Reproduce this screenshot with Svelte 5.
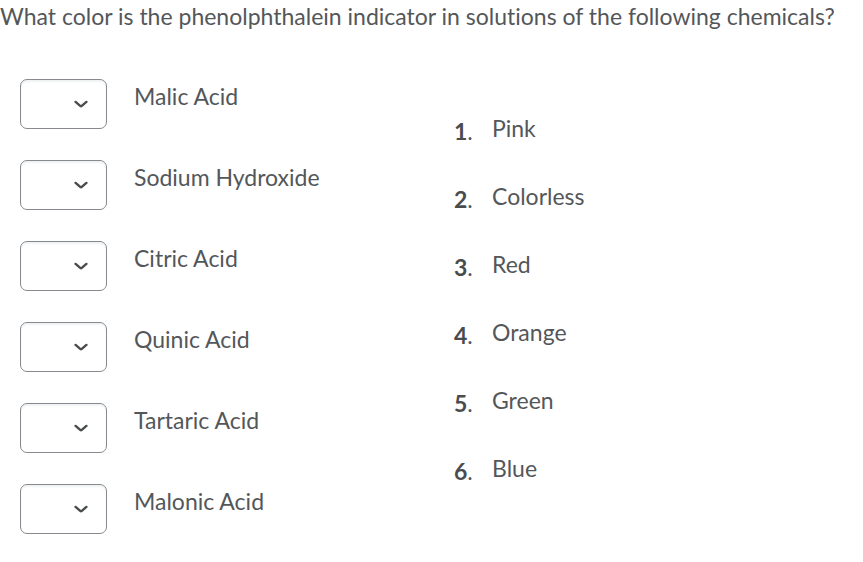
<script lang="ts">
  const chemicals = [
    'Malic Acid',
    'Sodium Hydroxide',
    'Citric Acid',
    'Quinic Acid',
    'Tartaric Acid',
    'Malonic Acid'
  ];
  const colors = ['Pink', 'Colorless', 'Red', 'Orange', 'Green', 'Blue'];

  let answers = $state(chemicals.map(() => ''));
</script>

<main class="question">
  <p class="prompt">What color is the phenolphthalein indicator in solutions of the following chemicals?</p>

  <div class="matching">
    <div class="chemicals">
      {#each chemicals as chemical, i (chemical)}
        <div class="chemical">
          <div class="picker">
            <select id="answer-{i}" bind:value={answers[i]}>
              <option value=""></option>
              {#each colors as color, n (color)}
                <option value={String(n + 1)}>{n + 1}</option>
              {/each}
            </select>
            <svg class="chevron" viewBox="0 0 14 8" aria-hidden="true">
              <path d="M1.6 1.9 L6.2 5.9 Q7 6.5 7.8 5.9 L12.4 1.9" />
            </svg>
          </div>
          <label for="answer-{i}">{chemical}</label>
        </div>
      {/each}
    </div>

    <ol class="colors">
      {#each colors as color, n (color)}
        <li>
          <span class="number"><b>{n + 1}</b>.</span>
          <span>{color}</span>
        </li>
      {/each}
    </ol>
  </div>
</main>

<style>
  :global(body) { background: #fff; }

  .question {
    font-family: Lato, 'Liberation Sans', sans-serif;
    font-size: 23px;
    font-variant-ligatures: none;
    line-height: 32px;
    color: #54575a;
  }

  .prompt { margin: 0; }

  .matching {
    display: grid;
    grid-template-columns: 434px 1fr;
    padding: 47px 0 0 20px;
  }

  .chemicals { display: flex; flex-direction: column; gap: 31px; }
  .chemical { display: flex; align-items: flex-start; gap: 27px; }
  .chemical label { margin-top: 1px; }

  .picker { display: grid; width: 87px; height: 50px; }
  .picker select,
  .picker .chevron { grid-area: 1 / 1; }

  select {
    appearance: none;
    width: 100%;
    height: 100%;
    padding: 0 36px 0 16px;
    border: 1px solid #868a8e;
    border-radius: 7px;
    background: #fff;
    box-shadow: inset 0 2px 2px #f0f2f4;
    color: inherit;
    font: inherit;
  }

  .chevron {
    align-self: center;
    justify-self: end;
    width: 14px;
    height: 8px;
    margin-right: 19px;
    fill: none;
    stroke: #494c4e;
    stroke-width: 2.4;
    stroke-linecap: round;
    stroke-linejoin: round;
    pointer-events: none;
  }

  .colors {
    display: flex;
    flex-direction: column;
    gap: 33px;
    margin: 0;
    padding: 33px 0 0;
    list-style: none;
  }
  .colors li { display: flex; }
  .number { width: 38px; padding-top: 3px; }
  .number b { color: #494c4e; font-weight: 700; }
</style>
